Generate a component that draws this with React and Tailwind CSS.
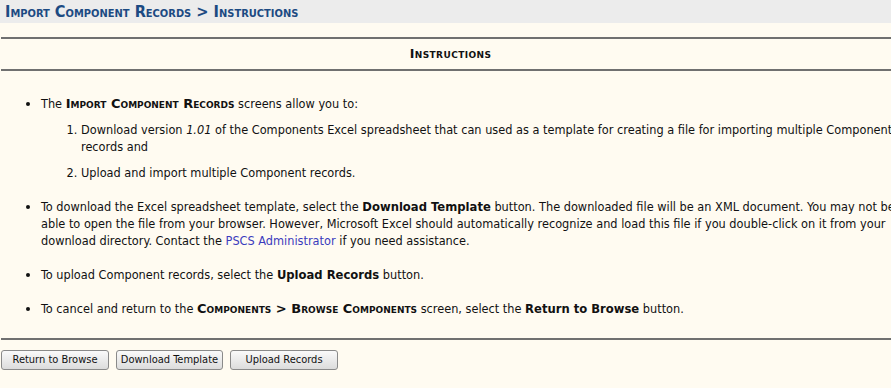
import React from "react";

const B = ({ children }) => (
  <b className="font-['DejaVu_Sans',sans-serif] font-bold text-[11.6px] leading-none">{children}</b>
);

const SC = ({ children }) => (
  <span className="font-bold font-['DejaVu_Sans',sans-serif] text-[13px] leading-none [font-variant:small-caps]">
    {children}
  </span>
);

export default function App() {
  return (
    <div className="w-full h-[388px] overflow-hidden bg-[#fffbf1] font-['DejaVu_Sans_Condensed','DejaVu_Sans',sans-serif] text-[12.62px] text-[#111]">
      <div className="w-[1000px]">
        <div className="h-[23px] bg-[#ececec] pl-[5px] pt-[3px]">
          <h1 className="text-[16.2px] leading-[18px] font-bold text-[#1c4a82] [font-variant:small-caps]">
            Import Component Records &gt; Instructions
          </h1>
        </div>
        <div className="pt-[14px]">
          <div className="mx-[1px] border-t-2 border-[#707070]" />
          <div className="h-[30px] flex items-center justify-center pl-[10px] w-[891px]">
            <span className="font-bold font-['DejaVu_Sans',sans-serif] text-[12.5px] tracking-[0.4px] [font-variant:small-caps]">Instructions</span>
          </div>
          <div className="mx-[1px] border-t-2 border-[#707070]" />
          <ul className="mt-[24px] pl-[41px] leading-[17px] list-disc whitespace-nowrap">
            <li>
              The <SC>Import Component Records</SC> screens allow you to:
              <ol className="list-decimal pl-[40px] mt-[9px]">
                <li>
                  Download version <i>1.01</i> of the Components Excel spreadsheet that can used as a template for creating a file for importing multiple Component
                  <br />records and
                </li>
                <li className="mt-[9px]">Upload and import multiple Component records.</li>
              </ol>
            </li>
            <li className="mt-[17px]">
              To download the Excel spreadsheet template, select the <B>Download Template</B> button. The downloaded file will be an XML document. You may not be
              <br />able to open the file from your browser. However, Microsoft Excel should automatically recognize and load this file if you double-click on it from your
              <br />download directory. Contact the <a className="text-[#3b3bbd]">PSCS Administrator</a> if you need assistance.
            </li>
            <li className="mt-[17px]">
              To upload Component records, select the <B>Upload Records</B> button.
            </li>
            <li className="mt-[17px]">
              To cancel and return to the <SC>Components &gt; Browse Components</SC> screen, select the <B>Return to Browse</B> button.
            </li>
          </ul>
          <div className="mt-[21px] mx-[1px] border-t-2 border-[#707070]" />
          <div className="flex gap-[7px] pl-[1px] pt-[10px]">
            {[
              ["Return to Browse", "w-[108px]"],
              ["Download Template", "w-[107px]"],
              ["Upload Records", "w-[108px]"],
            ].map(([t, w]) => (
              <button
                key={t}
                className={`${w} h-[20px] rounded-[3px] border border-[#8a8a8a] bg-gradient-to-b from-[#fafafa] to-[#dcdcdc] text-[11px] leading-[18px] text-[#111] font-['DejaVu_Sans_Condensed','DejaVu_Sans',sans-serif]`}
              >
                {t}
              </button>
            ))}
          </div>
        </div>
      </div>
    </div>
  );
}
